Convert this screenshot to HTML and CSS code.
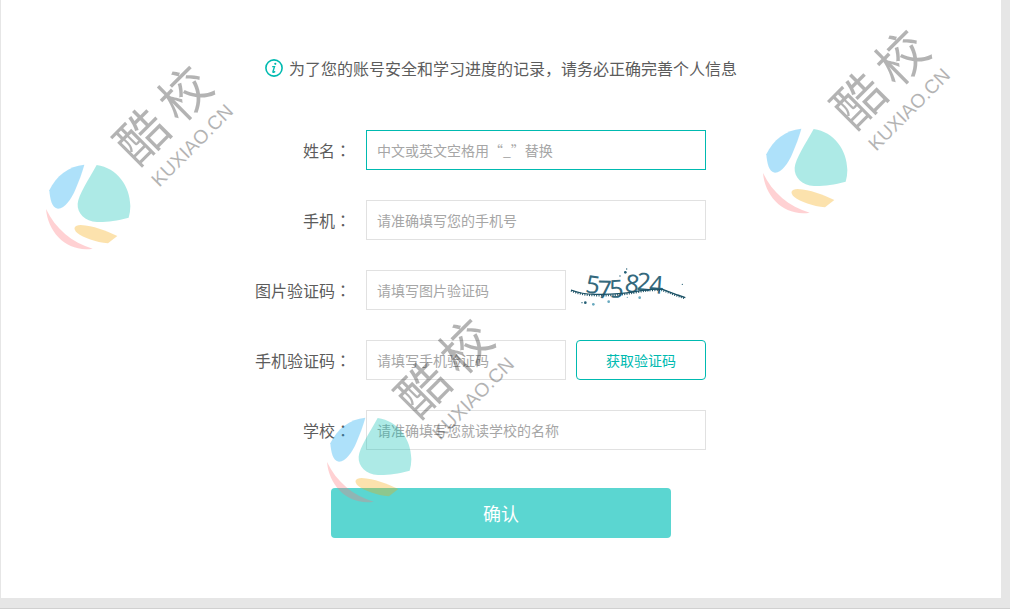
FILE: index.html
```html
<!DOCTYPE html>
<html lang="zh-CN">
<head>
<meta charset="utf-8">
<meta name="viewport" content="width=device-width, initial-scale=1">
<title>完善个人信息</title>
<link rel="stylesheet" href="styles.css">
</head>
<body>
<svg class="defs" aria-hidden="true">
  <symbol id="brand" viewBox="0 0 660 630" overflow="visible">
    <path fill="#08a4f0" d="M163 344C116 348 78 378 58 421C60 446 65 475 84 476C105 475 124 446 136 419C147 393 156 369 163 344Z"/>
    <path fill="#05c0b4" d="M200 345C262 354 300 408 301 468Q301 487 296 503C258 513 228 517 201 516C165 513 141 490 143 461C145 436 176 388 200 345Z"/>
    <path fill="#ff7378" d="M48 477C54 549 112 608 188 596C126 578 76 536 48 477Z"/>
    <path fill="#f6a805" d="M262 558L234 580C197 576 161 564 141 548C128 536 132 526 152 525C190 527 226 542 262 558Z"/>
    <g fill="#161616" transform="rotate(-45)">
      <text class="brand-name" y="476"><tspan x="-22">酷</tspan><tspan x="160">校</tspan></text>
      <text class="brand-site" x="-18" y="566">KUXIAO.CN</text>
    </g>
  </symbol>
</svg>

<main class="panel">
  <h1 class="notice">
    <svg class="notice-icon" viewBox="0 0 18 18" aria-hidden="true">
      <circle cx="9" cy="9" r="8.1" fill="none" stroke="currentColor" stroke-width="1.6"/>
      <circle cx="10.3" cy="4.8" r="1.1" fill="currentColor"/>
      <path d="M7.2 7.6h2.3L8 12.4q-.3 1.2.7.9l1.5-1" fill="none" stroke="currentColor" stroke-width="1.4"/>
    </svg>
    为了您的账号安全和学习进度的记录，请务必正确完善个人信息
  </h1>

  <form class="form">
    <div class="fields">
      <div class="row">
        <label for="name">姓名<span class="colon" lang="zh-TW">：</span></label>
        <input class="wide active" id="name" type="text" placeholder="中文或英文空格用“_”替换">
      </div>
      <div class="row">
        <label for="phone">手机<span class="colon" lang="zh-TW">：</span></label>
        <input class="wide" id="phone" type="tel" placeholder="请准确填写您的手机号">
      </div>
      <div class="row">
        <label for="captcha">图片验证码<span class="colon" lang="zh-TW">：</span></label>
        <input id="captcha" type="text" placeholder="请填写图片验证码">
        <svg class="captcha" viewBox="0 0 420 120" role="img" aria-label="图片验证码">
          <g class="captcha-digits">
            <text transform="translate(56 67) rotate(8)">5</text>
            <text transform="translate(94 84) rotate(2)">7</text>
            <text transform="translate(132 84) rotate(-4)">5</text>
            <text transform="translate(174 64) rotate(8)">8</text>
            <text transform="translate(211 60) rotate(4)">2</text>
            <text transform="translate(248 69) rotate(4)">4</text>
          </g>
          <path class="captcha-line" d="M15 60Q48 73 85 73Q150 75 206 65Q256 55 290 58L335 75L358 83"/>
          <path class="captcha-grain" d="M15 62Q48 76 85 76Q150 78 206 68Q256 58 290 61L335 78L358 85"/>
          <g fill="#245f75">
            <circle cx="178" cy="7" r="4"/><circle cx="182" cy="-3" r="2"/><circle cx="162" cy="18" r="2"/>
            <circle cx="58" cy="98" r="4"/><circle cx="48" cy="98" r="2"/><circle cx="349" cy="43" r="2"/>
          </g>
          <g fill="#68a9bf">
            <circle cx="82" cy="103" r="4"/><circle cx="128" cy="95" r="4"/><circle cx="221" cy="83" r="4"/><circle cx="184" cy="82" r="2"/>
          </g>
        </svg>
      </div>
      <div class="row">
        <label for="code">手机验证码<span class="colon" lang="zh-TW">：</span></label>
        <input id="code" type="text" placeholder="请填写手机验证码">
        <button class="get-code" type="button">获取验证码</button>
      </div>
      <div class="row">
        <label for="school">学校<span class="colon" lang="zh-TW">：</span></label>
        <input class="wide" id="school" type="text" placeholder="请准确填写您就读学校的名称">
      </div>
    </div>
    <button class="submit" type="submit">确认</button>
  </form>

  <svg class="watermark mark-left" aria-hidden="true"><use href="#brand"/></svg>
  <svg class="watermark mark-center" aria-hidden="true"><use href="#brand"/></svg>
  <svg class="watermark mark-right" aria-hidden="true"><use href="#brand"/></svg>
</main>
</body>
</html>
```

FILE: styles.css
```css
* {
  box-sizing: border-box;
}

body {
  margin: 0;
  min-height: 100vh;
  padding: 0 9px 10px 1px;
  display: flex;
  background: #e6e6e6;
  border-bottom: 1px solid #d0d0d0;
  color: #5c5c5c;
  font: 16px/24px "Noto Sans CJK SC", "Noto Sans", sans-serif;
}

.defs {
  position: absolute;
  width: 0;
  height: 0;
}

.panel {
  position: relative;
  flex: 1;
  padding: 56px 0 60px;
  background: #fff;
}

.notice {
  display: flex;
  justify-content: center;
  align-items: center;
  gap: 6px;
  margin: 0 0 50px;
  font-size: 16px;
  font-weight: 400;
  line-height: 24px;
}

.notice-icon {
  width: 18px;
  height: 18px;
  color: #00bab0;
}

.form {
  display: flex;
  flex-direction: column;
  align-items: center;
  gap: 38px;
}

.fields {
  display: grid;
  gap: 30px;
  width: 500px;
  max-width: 100%;
  padding-right: 45px;
}

.row {
  display: grid;
  grid-template-columns: 115px 200px 140px;
  align-items: center;
}

label {
  padding-right: 15px;
  text-align: right;
  white-space: nowrap;
}

.colon {
  font-family: "Noto Sans CJK TC", sans-serif;
}

input,
button {
  font-family: inherit;
}

input {
  width: 100%;
  height: 40px;
  padding: 0 10px;
  border: 1px solid #e1e1e1;
  border-radius: 0;
  background: #fff;
  color: #5c5c5c;
  font-size: 14px;
  outline: none;
}

input::placeholder {
  color: #a6a6a6;
  opacity: 1;
}

.wide {
  grid-column: 2 / 4;
}

.active,
input:focus {
  border-color: #00bab0;
}

.captcha {
  width: 140px;
  height: 40px;
  overflow: visible;
}

.captcha-digits {
  fill: #34697d;
  font: 74px "Noto Sans", sans-serif;
}

.captcha-line {
  fill: none;
  stroke: #1c5266;
  stroke-width: 4;
}

.captcha-grain {
  fill: none;
  stroke: #1c5266;
  stroke-width: 6;
  stroke-dasharray: 3 4;
}

.get-code {
  height: 40px;
  margin-left: 10px;
  border: 1px solid #00bab0;
  border-radius: 4px;
  background: #fff;
  color: #00bab0;
  font-size: 14px;
}

.submit {
  width: 340px;
  height: 50px;
  border: 0;
  border-radius: 4px;
  background: #5bd6d1;
  color: #fff;
  font-size: 18px;
}

.watermark {
  position: absolute;
  width: 220px;
  height: 210px;
  overflow: visible;
  opacity: 0.32;
  pointer-events: none;
}

.mark-left {
  left: 29px;
  top: 50px;
}

.mark-center {
  left: 310px;
  top: 303px;
}

.mark-right {
  right: 34px;
  top: 14px;
}

.brand-name {
  font: 152px "Noto Sans CJK SC", sans-serif;
}

.brand-site {
  font: 58px "Liberation Sans", Arial, sans-serif;
}
```
